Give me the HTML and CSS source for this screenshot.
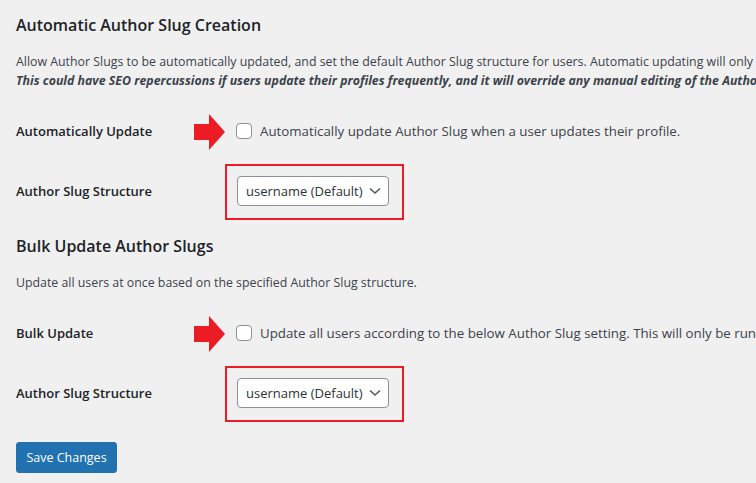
FILE: index.html
```html
<!DOCTYPE html>
<html lang="en">
<head>
    <meta charset="UTF-8">
    <title>Author Slug Settings</title>
    <link rel="stylesheet" href="styles.css">
</head>
<body>
    <div class="wrap">
        <h2>Automatic Author Slug Creation</h2>
        <p class="desc">Allow Author Slugs to be automatically updated, and set the default Author Slug structure for users. Automatic updating will only occur when a user updates their profile.<br>
        <em>This could have SEO repercussions if users update their profiles frequently, and it will override any manual editing of the Author Slug you may have done.</em></p>

        <div class="row">
            <div class="label">Automatically Update</div>
            <div class="field">
                <span class="arrow"><svg width="31" height="36" viewBox="0 0 31 36"><polygon points="0,10 15,10 15,0 31,18 15,36 15,26 0,26" fill="#ed1c24"/></svg></span>
                <label class="check"><input type="checkbox"> Automatically update Author Slug when a user updates their profile.</label>
            </div>
        </div>
        <div class="row">
            <div class="label">Author Slug Structure</div>
            <div class="field">
                <div class="mark">
                    <div class="select">username (Default)<svg width="12" height="8" viewBox="0 0 12 8"><polyline points="1,1.5 6,6 11,1.5" fill="none" stroke="#50575e" stroke-width="1.6"/></svg></div>
                </div>
            </div>
        </div>

        <h2>Bulk Update Author Slugs</h2>
        <p class="desc">Update all users at once based on the specified Author Slug structure.</p>

        <div class="row">
            <div class="label">Bulk Update</div>
            <div class="field">
                <span class="arrow"><svg width="31" height="36" viewBox="0 0 31 36"><polygon points="0,10 15,10 15,0 31,18 15,36 15,26 0,26" fill="#ed1c24"/></svg></span>
                <label class="check"><input type="checkbox"> Update all users according to the below Author Slug setting. This will only be run after clicking "Save Changes".</label>
            </div>
        </div>
        <div class="row">
            <div class="label">Author Slug Structure</div>
            <div class="field">
                <div class="mark">
                    <div class="select">username (Default)<svg width="12" height="8" viewBox="0 0 12 8"><polyline points="1,1.5 6,6 11,1.5" fill="none" stroke="#50575e" stroke-width="1.6"/></svg></div>
                </div>
            </div>
        </div>

        <button class="button">Save Changes</button>
    </div>
</body>
</html>
```

FILE: styles.css
```css
html, body {
    margin: 0;
    padding: 0;
    overflow: hidden;
}
body {
    background-color: #f0f0f1;
    color: #3c434a;
    font-family: "Open Sans", "Noto Sans", sans-serif;
    font-size: 13px;
}
.wrap {
    padding: 0 0 0 16px;
    white-space: nowrap;
}
h2 {
    font-size: 16px;
    font-weight: 600;
    color: #1d2327;
    line-height: 22px;
    margin: 14px 0 0;
}
h2 + .desc {
    margin-top: 16px;
}
.desc {
    font-size: 12.35px;
    line-height: 19px;
    margin-bottom: 11px;
}
.desc em {
    font-weight: 700;
}
.row {
    display: flex;
    align-items: center;
    height: 60px;
}
.row + h2 {
    margin-top: 14px;
}
.label {
    width: 220px;
    flex: none;
    font-size: 13px;
    font-weight: 600;
    color: #1d2327;
}
.field {
    position: relative;
    display: flex;
    align-items: center;
}
.arrow {
    position: absolute;
    left: -42px;
    top: 50%;
    margin-top: -17px;
    line-height: 0;
}
.check {
    display: flex;
    align-items: center;
    font-size: 13.3px;
    color: #3c434a;
}
.check input {
    appearance: none;
    width: 16px;
    height: 16px;
    margin: 0 8px 0 0;
    border: 1px solid #8c8f94;
    border-radius: 4px;
    background: #fff;
    box-sizing: border-box;
}
.mark {
    border: 2px solid #ed1c24;
    padding: 10px 13px 12px 10px;
    margin-left: -11px;
    margin-top: 1px;
}
.select {
    display: flex;
    align-items: center;
    justify-content: space-between;
    box-sizing: border-box;
    width: 152px;
    height: 30px;
    padding: 0 7px 0 8px;
    background: #fff;
    border: 1px solid #8c8f94;
    border-radius: 4px;
    color: #2c3338;
    font-size: 13px;
}
.button {
    margin-top: 19px;
    height: 31px;
    width: 101px;
    padding: 0;
    border: 1px solid #2271b1;
    border-radius: 3px;
    background: #2271b1;
    color: #fff;
    font-family: inherit;
    font-size: 12.5px;
}
```
